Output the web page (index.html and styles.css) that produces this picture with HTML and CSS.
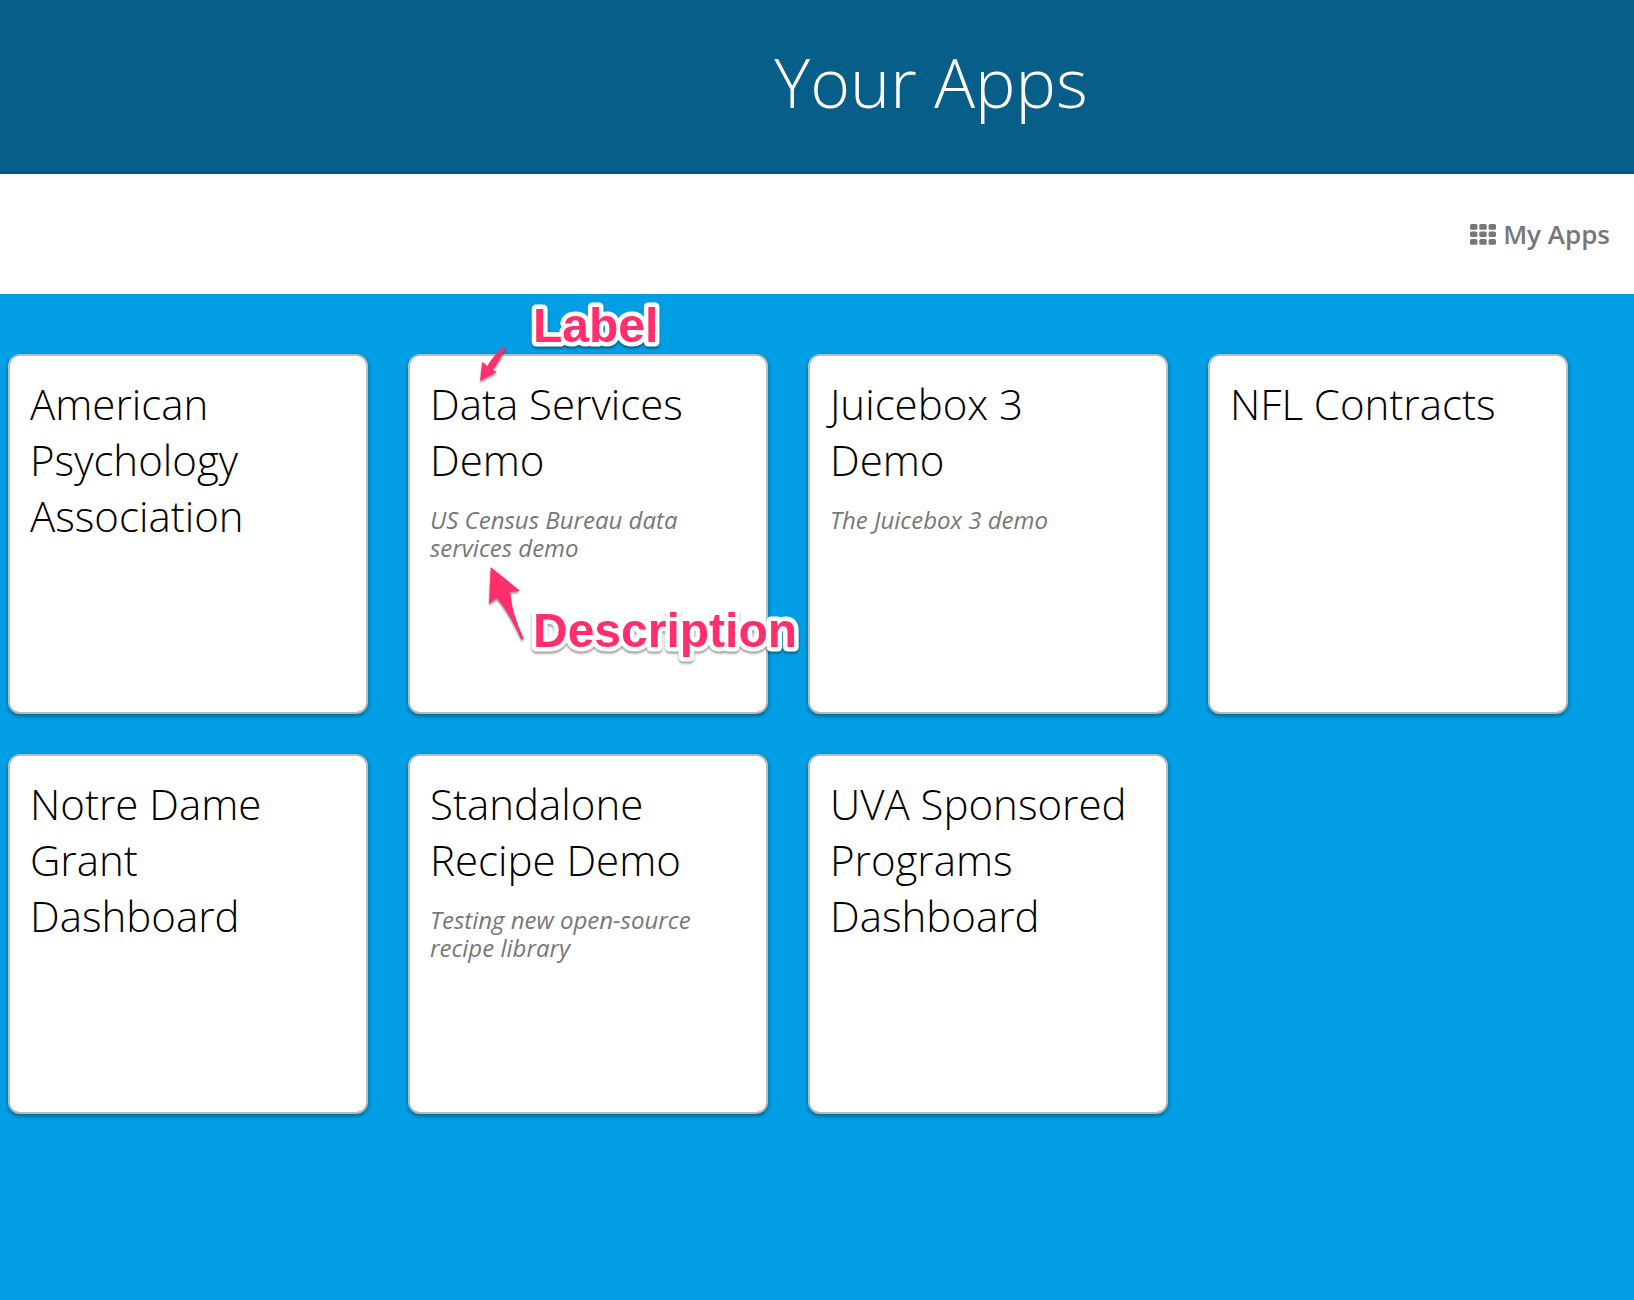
FILE: index.html
```html
<!DOCTYPE html>
<html lang="en">
<head>
<meta charset="utf-8">
<title>Your Apps</title>
<link rel="stylesheet" href="styles.css">
</head>
<body>
<header class="banner">
  <h1 class="banner-title">Your Apps</h1>
</header>
<nav class="toolbar">
  <a class="toolbar-link" href="#apps">
    <svg class="grid-icon" viewBox="0 0 26 21" aria-hidden="true">
      <g fill="currentColor">
        <rect x="0" y="0" width="7.4" height="5.8" rx="1.6"/><rect x="9.3" y="0" width="7.4" height="5.8" rx="1.6"/><rect x="18.6" y="0" width="7.4" height="5.8" rx="1.6"/>
        <rect x="0" y="7.5" width="7.4" height="5.6" rx="1.6"/><rect x="9.3" y="7.5" width="7.4" height="5.6" rx="1.6"/><rect x="18.6" y="7.5" width="7.4" height="5.6" rx="1.6"/>
        <rect x="0" y="15" width="7.4" height="5.8" rx="1.6"/><rect x="9.3" y="15" width="7.4" height="5.8" rx="1.6"/><rect x="18.6" y="15" width="7.4" height="5.8" rx="1.6"/>
      </g>
    </svg>
    <span>My Apps</span>
  </a>
</nav>
<main class="apps" id="apps">
  <article class="card">
    <h2 class="card-title">American Psychology Association</h2>
  </article>
  <article class="card">
    <h2 class="card-title">Data Services Demo</h2>
    <p class="card-text">US Census Bureau data services demo</p>
    <svg class="callouts" viewBox="450 296 380 380">
      <path class="arrow" d="M480 381 L482.3 361.7 L487.3 366 Q493 356 503 347 Q505 346 505 348.5 Q500 361 492.5 370 L497 372 Z"/>
      <path class="arrow" d="M490.7 567 L520 590.7 L510.3 592 Q511 611 523.4 638 Q523 640.5 521 639 Q508 611 496.7 598.3 L489 604 Z"/>
      <text class="callout" x="533" y="342">Label</text>
      <text class="callout" x="533" y="647">Description</text>
    </svg>
  </article>
  <article class="card">
    <h2 class="card-title">Juicebox 3 Demo</h2>
    <p class="card-text">The Juicebox 3 demo</p>
  </article>
  <article class="card">
    <h2 class="card-title">NFL Contracts</h2>
  </article>
  <article class="card">
    <h2 class="card-title">Notre Dame Grant Dashboard</h2>
  </article>
  <article class="card">
    <h2 class="card-title">Standalone Recipe Demo</h2>
    <p class="card-text">Testing new open-source recipe library</p>
  </article>
  <article class="card">
    <h2 class="card-title">UVA Sponsored Programs Dashboard</h2>
  </article>
</main>
</body>
</html>
```
FILE: styles.css
```css
* {
  box-sizing: border-box;
}

body {
  margin: 0;
  min-height: 100vh;
  display: flex;
  flex-direction: column;
  font-family: "Open Sans", sans-serif;
  background: #029fe6;
}

.banner {
  padding: 36px 0 44px 228px;
  border-bottom: 2px solid #04557c;
  background: #075e89;
  text-align: center;
}

.banner-title {
  margin: 0;
  font-size: 68px;
  line-height: 92px;
  font-weight: 300;
  color: #fff;
}

.toolbar {
  display: flex;
  justify-content: flex-end;
  align-items: center;
  padding: 42px 24px;
  background: #fff;
}

.toolbar-link {
  display: flex;
  align-items: center;
  gap: 7px;
  font-size: 26px;
  line-height: 36px;
  font-weight: 600;
  color: #777;
  text-decoration: none;
}

.grid-icon {
  width: 26px;
  height: 21px;
}

.apps {
  flex: 1;
  display: grid;
  grid-template-columns: repeat(auto-fill, 360px);
  align-content: start;
  gap: 40px;
  padding: 60px 8px;
}

.card {
  position: relative;
  height: 360px;
  padding: 20px;
  border: 2px solid #bbb;
  border-radius: 12px;
  background: #fff;
  box-shadow: 0 2px 4px rgba(0, 0, 0, 0.4);
}

.card-title {
  margin: 0;
  font-size: 42px;
  line-height: 56px;
  font-weight: 300;
  color: #000;
}

.card-text {
  margin: 18px 0 0;
  font-size: 24px;
  line-height: 28px;
  font-style: italic;
  color: #777;
}

.callouts {
  position: absolute;
  z-index: 1;
  top: -60px;
  left: 40px;
  width: 380px;
  height: 380px;
  pointer-events: none;
  filter: drop-shadow(0 2px 1px rgba(0, 0, 0, 0.4));
}

.arrow {
  fill: #ff2f6e;
}

.callout {
  font-family: "Liberation Sans", Arial, sans-serif;
  font-size: 48px;
  font-weight: 700;
  fill: #ff2f6e;
  stroke: #fff;
  stroke-width: 9px;
  stroke-linejoin: round;
  paint-order: stroke;
}
```
